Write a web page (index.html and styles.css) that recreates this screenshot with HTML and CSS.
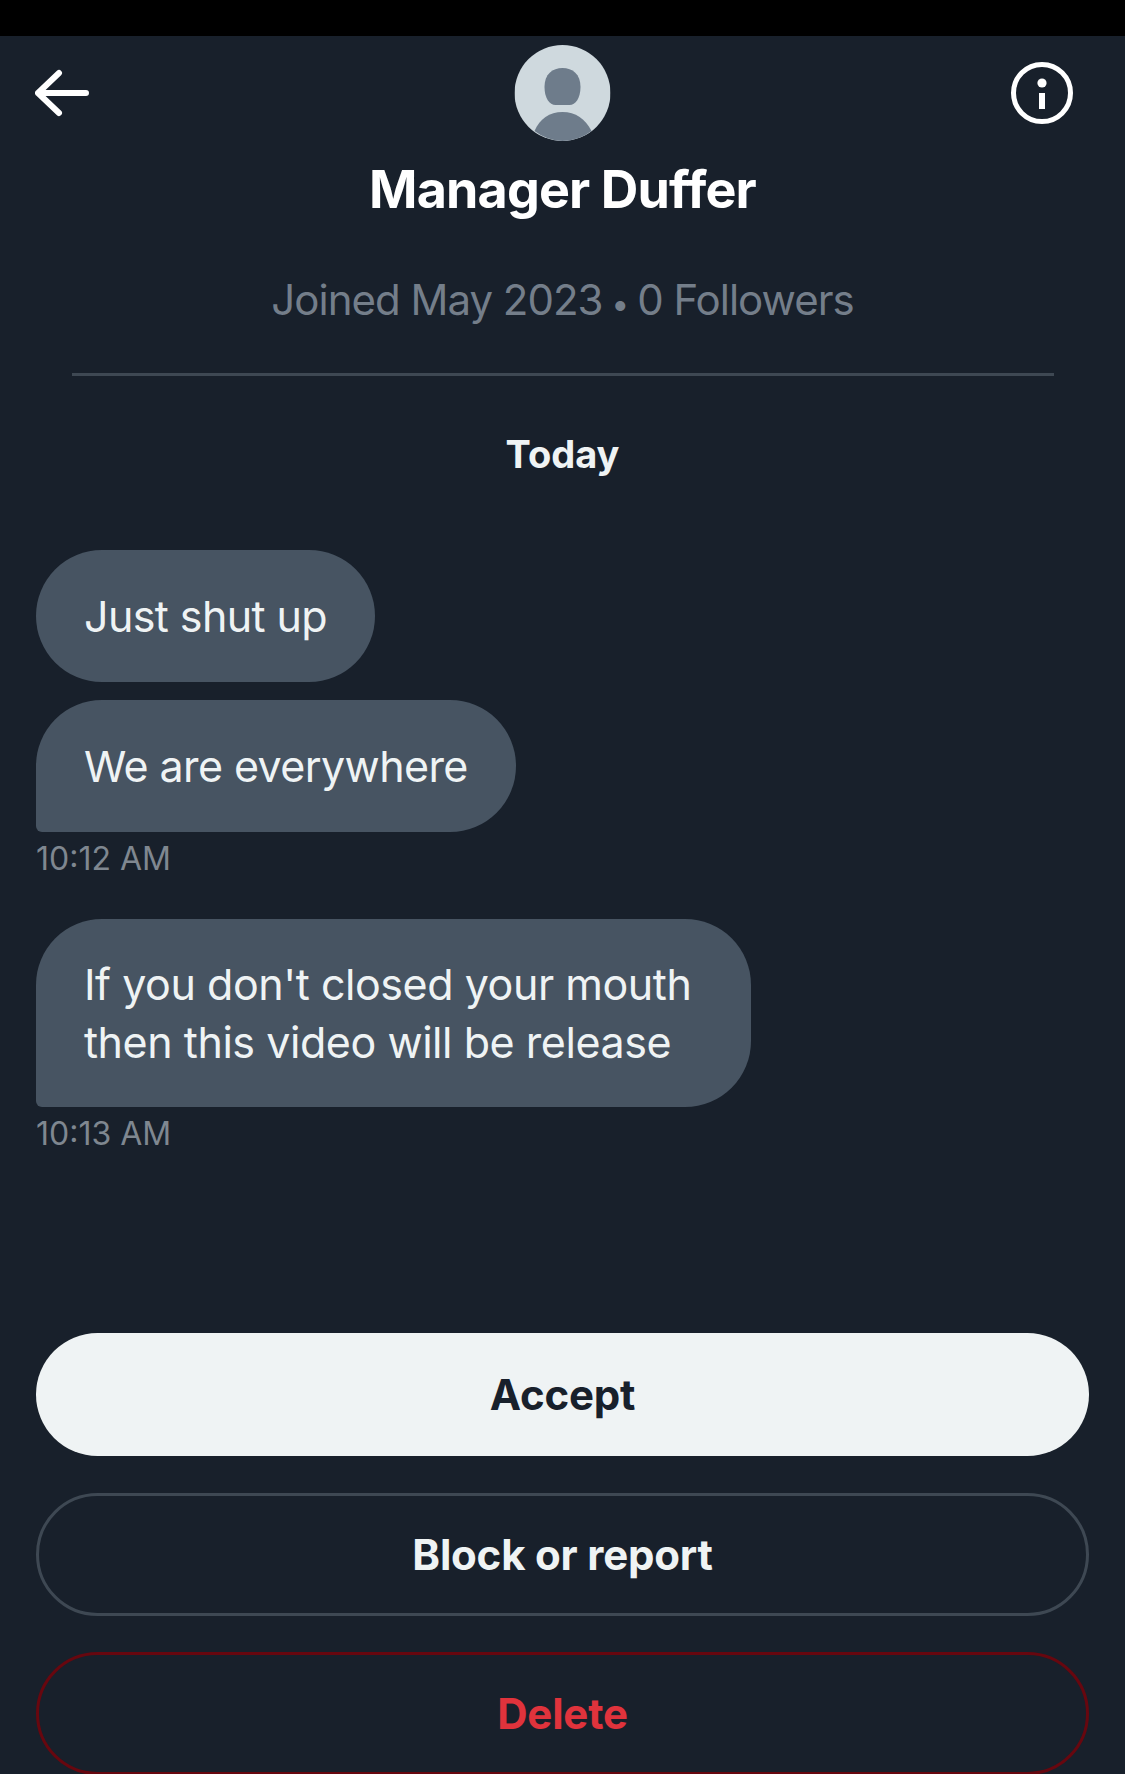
FILE: index.html
```html
<!DOCTYPE html>
<html lang="en">

<head>
    <meta charset="UTF-8">
    <meta name="viewport" content="width=device-width, initial-scale=1.0">
    <title>Manager Duffer</title>
    <link rel="stylesheet" href="styles.css">
</head>

<body>
    <div class="page">
        <div class="statusBar"></div>

        <div class="topRow">
            <svg class="icon" width="60" height="96" viewBox="0 0 60 96">
                <path d="M24 28 L3 48 L24 68 M3 48 H51" fill="none" stroke="#fff" stroke-width="6" stroke-linecap="round" stroke-linejoin="round" />
            </svg>
            <svg class="avatar" width="96" height="96" viewBox="0 0 96 96">
                <circle cx="48" cy="48" r="48" fill="#cfd9de" />
                <path d="M48 23 C38 23 30 29 30 42 C30 53 35 60 41 60 H55 C61 60 66 53 66 42 C66 29 58 23 48 23 Z" fill="#6e7c8b" />
                <path d="M20 86 C25 74 35 67 48 67 C61 67 71 74 77 86 A48 48 0 0 1 48 96 A48 48 0 0 1 20 86 Z" fill="#6e7c8b" />
            </svg>
            <svg class="icon info" width="66" height="96" viewBox="0 0 66 96">
                <circle cx="33" cy="48" r="28.5" fill="none" stroke="#fff" stroke-width="5" />
                <circle cx="33" cy="38" r="4.6" fill="#fff" />
                <rect x="30" y="48" width="6" height="16" fill="#fff" />
            </svg>
        </div>

        <h1 class="name">Manager Duffer</h1>
        <p class="meta">Joined May 2023 <span class="dot">•</span> 0 Followers</p>
        <hr class="divider">
        <p class="day">Today</p>

        <div class="thread">
            <div class="bubble">Just shut up</div>
            <div class="bubble last second">We are everywhere</div>
            <span class="time">10:12 AM</span>
            <div class="bubble last third">If you don't closed your mouth then this video will be release</div>
            <span class="time">10:13 AM</span>
        </div>

        <div class="actions">
            <button class="btn accept">Accept</button>
            <button class="btn block">Block or report</button>
            <button class="btn delete">Delete</button>
        </div>
    </div>
</body>

</html>
```

FILE: styles.css
```css
* {
    box-sizing: border-box;
}

body {
    margin: 0;
    background-color: #18202b;
    font-family: Inter, "Noto Sans", sans-serif;
    color: #eff3f4;
}

.page {
    height: 1774px;
    overflow: hidden;
    display: flex;
    flex-direction: column;
}

.page > * {
    flex-shrink: 0;
}

.statusBar {
    height: 36px;
    background-color: #000;
}

.topRow {
    display: grid;
    grid-template-columns: 1fr auto 1fr;
    padding: 9px 50px 0 35px;
}

.icon,
.avatar {
    display: block;
}

.info {
    justify-self: end;
}

.avatar {
    transform: translateX(7.5px);
}

.name {
    margin: 21px 0 0;
    font-size: 52px;
    line-height: 56px;
    font-weight: 700;
    letter-spacing: -0.85px;
    text-align: center;
    color: #fff;
}

.meta {
    margin: 58px 0 0;
    font-size: 42px;
    line-height: 48px;
    letter-spacing: -1px;
    text-align: center;
    color: #747e8a;
}

.dot {
    margin: 0 -2px;
    font-size: 32px;
    line-height: 1;
}

.divider {
    width: 982px;
    height: 3px;
    margin: 49px 0 0 72px;
    border: 0;
    background-color: #3e4853;
}

.day {
    margin: 54px 0 0;
    font-size: 38px;
    line-height: 48px;
    font-weight: 700;
    text-align: center;
}

.thread {
    margin: 72px 0 0 36px;
    display: flex;
    flex-direction: column;
    align-items: flex-start;
}

.bubble {
    max-width: 715px;
    padding: 37px 48px 37px 48px;
    border-radius: 66px;
    background-color: #475462;
    font-size: 43px;
    line-height: 58px;
    letter-spacing: -0.6px;
}

.bubble.last {
    border-bottom-left-radius: 6px;
}

.second {
    margin-top: 18px;
}

.third {
    margin-top: 42px;
    width: 715px;
    padding-top: 36px;
    padding-bottom: 36px;
    letter-spacing: -0.45px;
}

.time {
    margin-top: 9px;
    font-size: 32px;
    line-height: 36px;
    color: #7f8790;
}

.actions {
    margin: 181px 36px 0;
    display: flex;
    flex-direction: column;
    gap: 36.5px;
}

.btn {
    height: 123px;
    flex-shrink: 0;
    border-radius: 62px;
    background: none;
    font-family: inherit;
    font-size: 42px;
    font-weight: 700;
    letter-spacing: -0.2px;
}

.accept {
    border: 0;
    background-color: #eff3f4;
    color: #18202b;
}

.block {
    border: 3px solid #3e4853;
    color: #eff3f4;
}

.delete {
    border: 3px solid #67070f;
    color: #e0333c;
}
```
